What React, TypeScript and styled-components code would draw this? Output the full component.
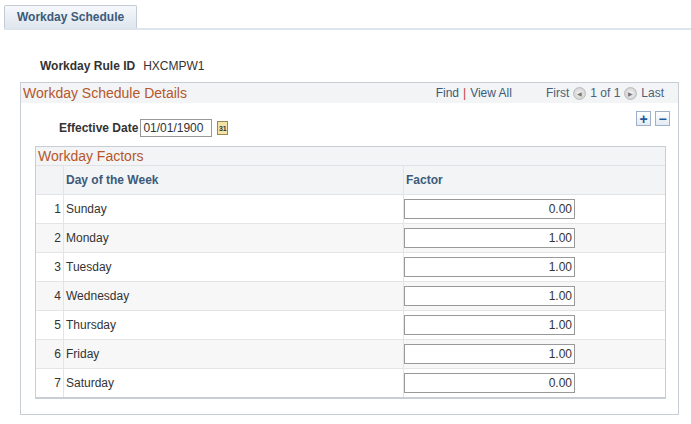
import React from "react";
import styled, { createGlobalStyle } from "styled-components";

const Global = createGlobalStyle`
  body { margin: 0; background: #fff; font-family: Arial, "Liberation Sans", sans-serif; font-size: 12px; color: #333; }
`;

const Page = styled.div`
  width: 691px;
  height: 424px;
  padding-top: 5px;
  box-sizing: border-box;
`;

const TabBar = styled.div`
  display: flex;
  margin-left: 4px;
  border-bottom: 2px solid #dde4ec;
`;

const Tab = styled.div`
  height: 22px;
  padding: 0 12px;
  display: flex;
  align-items: center;
  font-weight: bold;
  color: #3c5a7a;
  background: linear-gradient(#f6f8fb, #dfe6ee);
  border: 1px solid #c3ccd6;
  border-bottom: none;
  border-radius: 2px 2px 0 0;
`;

const RuleRow = styled.div`
  display: flex;
  gap: 8px;
  margin: 29px 0 0 40px;
  height: 14px;
  align-items: center;
`;

const Label = styled.span`
  font-weight: bold;
  color: #333;
`;

const Box = styled.div`
  margin: 9px 12px 0 20px;
  border: 1px solid #c9ced6;
  height: 333px;
  box-sizing: border-box;
`;

const BoxHead = styled.div`
  display: flex;
  align-items: center;
  height: 20px;
  background: #f2f4f5;
  padding: 0 2px;
`;

const Caption = styled.span`
  font-size: 14px;
  color: #b6572b;
  flex: 1;
`;

const Nav = styled.div`
  display: flex;
  align-items: center;
  gap: 4px;
  color: #4c5f7a;
  padding-right: 12px;
`;

const Link = styled.span`
  color: #3c5a7a;
`;

const Sep = styled.span`
  color: #c43b3b;
`;

const Spacer = styled.span`
  width: 26px;
`;

const Arrow = styled.span`
  width: 13px;
  height: 13px;
  border-radius: 50%;
  background: radial-gradient(#f4f4f4, #c8c8c8);
  border: 1px solid #bbb;
  box-sizing: border-box;
  display: inline-flex;
  align-items: center;
  justify-content: center;
  font-size: 6px;
  color: #777;
`;

const Tools = styled.div`
  display: flex;
  justify-content: flex-end;
  gap: 4px;
  padding: 8px 8px 0 0;
`;

const ToolBtn = styled.span`
  width: 15px;
  height: 15px;
  border: 1px solid #9fb1c8;
  background: linear-gradient(#fff, #e4ebf3);
  box-sizing: border-box;
  display: flex;
  align-items: center;
  justify-content: center;
  color: #1e5aa0;
  font-weight: bold;
  font-size: 14px;
  line-height: 1;
`;

const DateRow = styled.div`
  display: flex;
  align-items: center;
  gap: 2px;
  margin: -8px 0 0 38px;
  height: 20px;
`;

const DateInput = styled.div`
  width: 72px;
  height: 18px;
  border: 1px solid #999;
  padding: 0 2px;
  display: flex;
  align-items: center;
  box-sizing: border-box;
  font-size: 12px;
`;

const Cal = styled.span`
  width: 11px;
  height: 14px;
  background: #f3e3a6;
  border: 1px solid #9a8a50;
  box-sizing: border-box;
  font-size: 7px;
  font-weight: bold;
  display: flex;
  align-items: center;
  justify-content: center;
  margin-left: 3px;
`;

const Grid = styled.div`
  margin: 8px 12px 0 14px;
  border: 1px solid #c9ced6;
  border-bottom-width: 2px;
`;

const GridCaption = styled.div`
  height: 18px;
  background: #f2f4f5;
  display: flex;
  align-items: center;
  padding-left: 2px;
  font-size: 14px;
  color: #b6572b;
  border-bottom: 1px solid #dfe3e8;
`;

const Row = styled.div<{ $alt?: boolean; $head?: boolean }>`
  display: grid;
  grid-template-columns: 28px 340px 1fr;
  height: 28px;
  background: ${(p) => (p.$head ? "#f2f4f5" : p.$alt ? "#f7f7f7" : "#fff")};
  border-bottom: 1px solid #e2e4e7;
  &:last-child { border-bottom: none; }
`;

const Cell = styled.div<{ $num?: boolean; $head?: boolean }>`
  display: flex;
  align-items: center;
  justify-content: ${(p) => (p.$num ? "flex-end" : "flex-start")};
  padding: 0 2px;
  border-right: 1px solid #e2e4e7;
  font-weight: ${(p) => (p.$head ? "bold" : "normal")};
  color: ${(p) => (p.$head ? "#3c5a7a" : "#333")};
  &:last-child { border-right: none; padding-left: ${(p) => (p.$head ? 2 : 0)}px; }
`;

const NumInput = styled.div`
  width: 171px;
  height: 20px;
  border: 1px solid #999;
  box-sizing: border-box;
  display: flex;
  align-items: center;
  justify-content: flex-end;
  padding-right: 2px;
  background: #fff;
`;

const days = [
  ["Sunday", "0.00"],
  ["Monday", "1.00"],
  ["Tuesday", "1.00"],
  ["Wednesday", "1.00"],
  ["Thursday", "1.00"],
  ["Friday", "1.00"],
  ["Saturday", "0.00"],
];

export default function App() {
  return (
    <Page>
      <Global />
      <TabBar>
        <Tab>Workday Schedule</Tab>
      </TabBar>
      <RuleRow>
        <Label>Workday Rule ID</Label>
        <span>HXCMPW1</span>
      </RuleRow>
      <Box>
        <BoxHead>
          <Caption>Workday Schedule Details</Caption>
          <Nav>
            <Link>Find</Link>
            <Sep>|</Sep>
            <Link>View All</Link>
            <Spacer />
            <span>First</span>
            <Arrow>◀</Arrow>
            <span>1 of 1</span>
            <Arrow>▶</Arrow>
            <span>Last</span>
          </Nav>
        </BoxHead>
        <Tools>
          <ToolBtn>+</ToolBtn>
          <ToolBtn>−</ToolBtn>
        </Tools>
        <DateRow>
          <Label>Effective Date</Label>
          <DateInput>01/01/1900</DateInput>
          <Cal>31</Cal>
        </DateRow>
        <Grid>
          <GridCaption>Workday Factors</GridCaption>
          <Row $head>
            <Cell $head />
            <Cell $head>Day of the Week</Cell>
            <Cell $head>Factor</Cell>
          </Row>
          {days.map(([d, f], i) => (
            <Row key={d} $alt={i % 2 === 1}>
              <Cell $num>{i + 1}</Cell>
              <Cell>{d}</Cell>
              <Cell>
                <NumInput>{f}</NumInput>
              </Cell>
            </Row>
          ))}
        </Grid>
      </Box>
    </Page>
  );
}
